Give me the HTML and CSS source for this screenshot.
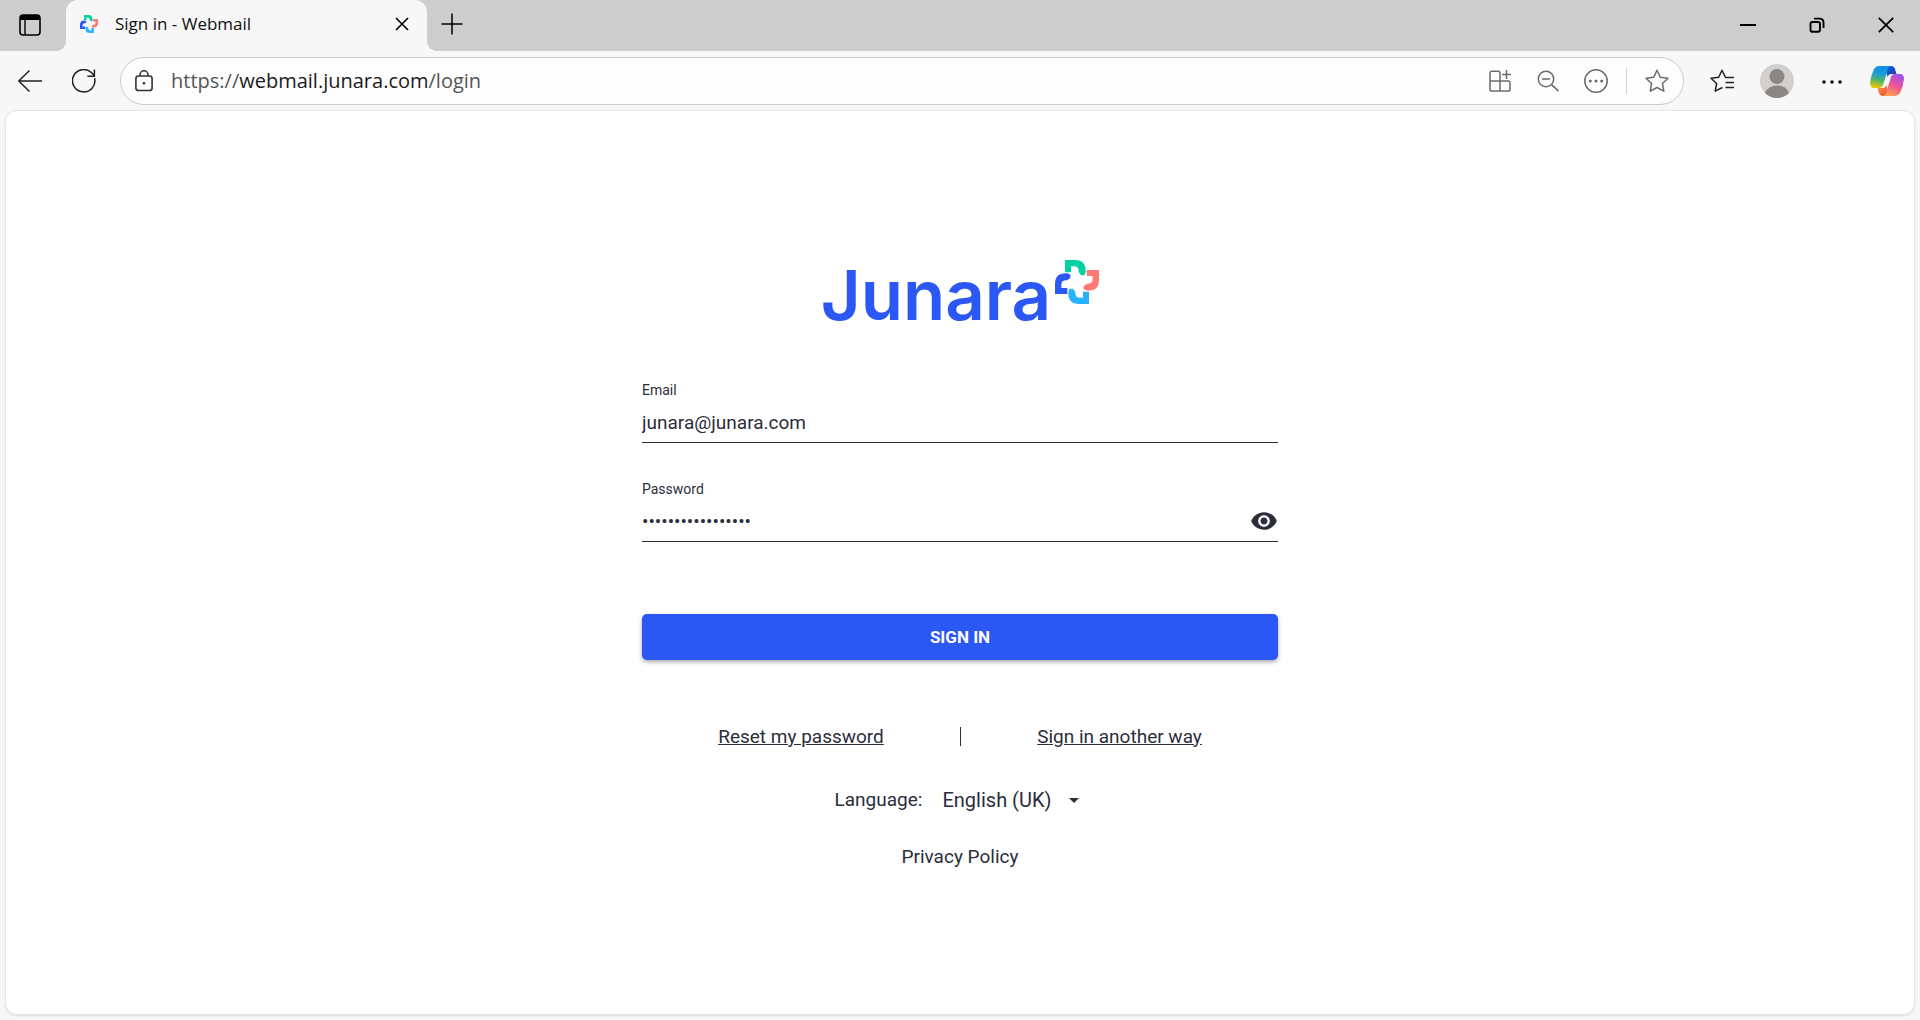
FILE: index.html
```html
<!DOCTYPE html>
<html lang="en">

<head>
    <meta charset="utf-8">
    <title>Sign in - Webmail</title>
    <link rel="stylesheet" href="styles.css">
</head>

<body>
    <!-- shared logo mark: one piece turned four times -->
    <svg class="defs" width="0" height="0" aria-hidden="true">
        <symbol id="mark" viewBox="0 0 132 132">
            <path fill="#00d2a5" d="M30 0H60Q92 0 92 32Q92 40 88 46H78L71 36Q72 19 58 19H48V37H30Z"/>
            <path fill="#ff7a76" transform="rotate(90 66 66)" d="M30 0H60Q92 0 92 32Q92 40 88 46H78L71 36Q72 19 58 19H48V37H30Z"/>
            <path fill="#27b3ff" transform="rotate(180 66 66)" d="M30 0H60Q92 0 92 32Q92 40 88 46H78L71 36Q72 19 58 19H48V37H30Z"/>
            <path fill="#2b57f5" transform="rotate(270 66 66)" d="M30 0H60Q92 0 92 32Q92 40 88 46H78L71 36Q72 19 58 19H48V37H30Z"/>
        </symbol>
    </svg>

    <header class="browser">
        <div class="tab-strip">
            <button class="icon-button tab-actions" aria-label="Tab actions">
                <svg width="24" height="24" viewBox="0 0 24 24"><rect x="2" y="2" width="20" height="20" rx="3" fill="none" stroke="#000" stroke-width="1.6"/><path d="M2 7V5q0-3 3-3h14q3 0 3 3v2z"/><path d="M7 7v15" stroke="#000" stroke-width="1.4"/></svg>
            </button>
            <div class="tab">
                <svg class="favicon" width="18" height="18"><use href="#mark"/></svg>
                <span class="tab-title">Sign in - Webmail</span>
                <button class="icon-button" aria-label="Close tab">
                    <svg width="14" height="14" viewBox="0 0 14 14"><path d="M1 1l12 12M13 1L1 13" fill="none" stroke="#000" stroke-width="1.6"/></svg>
                </button>
            </div>
            <button class="icon-button new-tab" aria-label="New tab">
                <svg width="22" height="22" viewBox="0 0 22 22"><path d="M11 .5v21M.5 11h21" fill="none" stroke="#000" stroke-width="1.5"/></svg>
            </button>
            <div class="window-controls">
                <button class="icon-button" aria-label="Minimise">
                    <svg width="16" height="16" viewBox="0 0 16 16"><path d="M0 8h16" stroke="#000" stroke-width="2"/></svg>
                </button>
                <button class="icon-button" aria-label="Restore">
                    <svg width="16" height="16" viewBox="0 0 16 16" fill="none" stroke="#000" stroke-width="1.9"><rect x="1.5" y="5" width="9.5" height="9.8" rx="2"/><path d="M5 1.6h5.5q4 0 4 4V11"/></svg>
                </button>
                <button class="icon-button" aria-label="Close">
                    <svg width="16" height="16" viewBox="0 0 16 16"><path d="M.8.8l14.4 14.4M15.2.8L.8 15.2" fill="none" stroke="#000" stroke-width="1.8"/></svg>
                </button>
            </div>
        </div>

        <div class="toolbar">
            <button class="icon-button" aria-label="Back">
                <svg width="24" height="24" viewBox="0 0 24 24" fill="none" stroke="#222" stroke-width="1.5"><path d="M24 12H.8M11.5 1.5L.8 12l10.7 10.5"/></svg>
            </button>
            <button class="icon-button reload" aria-label="Reload">
                <svg width="24" height="24" viewBox="0 0 24 24" fill="none" stroke="#222" stroke-width="1.5"><path d="M22.6 9.2A11.2 11.2 0 1 1 19.6 3.8l2.6 2.8M22.4.5v6.7h-7"/></svg>
            </button>

            <div class="address-bar">
                <svg width="18" height="22" viewBox="0 0 18 22" fill="none" stroke="#333" stroke-width="1.6"><rect x=".9" y="6" width="16.2" height="14.5" rx="2.6"/><path d="M5 6V4.8a4 4 0 0 1 8 0V6"/><circle cx="9" cy="13.2" r="1.3" fill="#333" stroke="none"/></svg>
                <a class="url" href="#"><span>https://</span>webmail.junara.com<span>/login</span></a>
                <div class="address-actions">
                    <button class="icon-button" aria-label="Install app">
                        <svg width="24" height="24" viewBox="0 0 24 24" fill="none" stroke="#6b6b6b" stroke-width="1.5"><path d="M12 12V4q0-1.8-1.8-1.8H3.800Q2 2.200 2 4v16.200Q2 22 3.800 22h16.400q1.800 0 1.800-1.800V13.800Q22 12 20.200 12H2M12 12v10M18.500 1v9M14 5.500h9"/></svg>
                    </button>
                    <button class="icon-button" aria-label="Zoom out">
                        <svg width="24" height="24" viewBox="0 0 24 24" fill="none" stroke="#6b6b6b" stroke-width="1.5"><circle cx="10" cy="10" r="7.7"/><path d="M15.6 15.6l6.900 6.500M6 10h8"/></svg>
                    </button>
                    <button class="icon-button" aria-label="More actions">
                        <svg width="24" height="24" viewBox="0 0 24 24" fill="none" stroke="#6b6b6b" stroke-width="1.5"><circle cx="12" cy="12" r="11.2"/><g fill="#6b6b6b" stroke="none"><circle cx="6.3" cy="12" r="1.5"/><circle cx="12" cy="12" r="1.5"/><circle cx="17.7" cy="12" r="1.5"/></g></svg>
                    </button>
                    <span class="separator"></span>
                    <button class="icon-button" aria-label="Add to favourites">
                        <svg width="24" height="24" viewBox="0 0 24 24" fill="none" stroke="#6b6b6b" stroke-width="1.5" stroke-linejoin="round"><path d="M12 1.200l3.300 7 7.700 1-5.600 5.300 1.400 7.700-6.800-3.700-6.800 3.700 1.400-7.700L1 9.200l7.700-1z"/></svg>
                    </button>
                </div>
            </div>

            <button class="icon-button" aria-label="Favourites">
                <svg width="24" height="24" viewBox="0 0 24 24" fill="none" stroke="#222" stroke-width="1.5" stroke-linejoin="round"><path d="M15.300 8.200L12 1.200 8.700 8.200 1 9.200l5.600 5.300-1.400 7.700L12.500 18.500M15.500 13.500H24M15.500 18.500H24M15 8.500h9"/></svg>
            </button>
            <button class="icon-button" aria-label="Profile">
                <svg width="34" height="34" viewBox="0 0 34 34"><circle cx="17" cy="17" r="17" fill="#d2d0ce"/><circle cx="17" cy="12.5" r="7.5" fill="#8a8683"/><path d="M5 29Q8 21.500 17 21.500T29 29Q24 34 17 34T5 29z" fill="#8a8683"/></svg>
            </button>
            <button class="icon-button more" aria-label="Settings and more">
                <svg width="20" height="20" viewBox="0 0 20 20" fill="#111"><circle cx="2" cy="11" r="1.8"/><circle cx="10" cy="11" r="1.8"/><circle cx="18" cy="11" r="1.8"/></svg>
            </button>
            <button class="icon-button" aria-label="Copilot">
                <svg width="34" height="32" viewBox="0 0 34 32">
                    <defs>
                        <linearGradient id="cool" x1="0.5" y1="0" x2="0.3" y2="1"><stop offset="0" stop-color="#0f8fe6"/><stop offset=".35" stop-color="#1b9cdc"/><stop offset=".65" stop-color="#50b860"/><stop offset="1" stop-color="#f6c800"/></linearGradient>
                        <linearGradient id="warm" x1="0.7" y1="0" x2="0.3" y2="1"><stop offset="0" stop-color="#a04ef0"/><stop offset=".5" stop-color="#ee5594"/><stop offset="1" stop-color="#ffa04e"/></linearGradient>
                        <linearGradient id="navy" x1="0" y1="0" x2="1" y2="1"><stop offset="0" stop-color="#0a62dc"/><stop offset="1" stop-color="#2338b4"/></linearGradient>
                        <linearGradient id="ember" x1="0" y1="0" x2="1" y2="1"><stop offset="0" stop-color="#ffa040"/><stop offset="1" stop-color="#e8433c"/></linearGradient>
                    </defs>
                    <path fill="url(#navy)" d="M15 1h6q3 0 4 3l1.500 5h-5q-3 0-4 3z"/>
                    <path fill="url(#ember)" d="M19 31h-6q-3 0-4-3l-1.500-5h5q3 0 4-3z"/>
                    <path fill="url(#cool)" d="M9 1h12q-2 0-3 3l-5 16q-1 3-4 3H4q-4 0-4-5Q1 10 4 4q2-3 5-3z"/>
                    <path fill="url(#warm)" d="M25 31H13q2 0 3-3l5-16q1-3 4-3h5q4 0 4 5-1 8-4 14-2 3-5 3z"/>
                </svg>
            </button>
        </div>
    </header>

    <main class="page">
        <form class="login" onsubmit="return false">
            <div class="logo">
                <span class="logo-text">Junara</span>
                <svg class="logo-mark" width="44" height="44"><use href="#mark"/></svg>
            </div>

            <div class="field">
                <label for="email">Email</label>
                <input type="email" id="email" value="junara@junara.com" spellcheck="false">
            </div>

            <div class="field">
                <label for="password">Password</label>
                <div class="password-row">
                    <input type="password" id="password" value="abcdefghijklmnopq">
                    <button type="button" class="icon-button" id="toggle" aria-label="Show password">
                        <svg width="28" height="28" viewBox="0 0 24 24" fill="#2b2d3b"><path d="M12 4.500C7 4.500 2.730 7.610 1 12c1.730 4.390 6 7.500 11 7.500s9.270-3.110 11-7.500c-1.730-4.390-6-7.500-11-7.500zM12 17c-2.760 0-5-2.240-5-5s2.240-5 5-5 5 2.240 5 5-2.240 5-5 5zm0-8c-1.660 0-3 1.340-3 3s1.340 3 3 3 3-1.340 3-3-1.340-3-3-3z"/></svg>
                    </button>
                </div>
            </div>

            <button type="submit" class="submit-button">SIGN IN</button>

            <div class="links">
                <a href="#">Reset my password</a>
                <span class="divider"></span>
                <a href="#">Sign in another way</a>
            </div>

            <div class="language">
                <label for="language">Language:</label>
                <div class="select-wrap">
                    <select id="language">
                        <option>English (UK)</option>
                    </select>
                    <svg width="10" height="5" viewBox="0 0 10 5"><path d="M0 0h10L5 5z" fill="#2b2d3b"/></svg>
                </div>
            </div>

            <a class="privacy" href="#">Privacy Policy</a>
        </form>
    </main>

    <script>
        // show or hide the password
        document.getElementById("toggle").addEventListener("click", function () {
            const password = document.getElementById("password");
            password.type = password.type === "password" ? "text" : "password";
        });
    </script>
</body>

</html>
```

FILE: styles.css
```css
* {
    box-sizing: border-box;
}

body {
    margin: 0;
    min-height: 100vh;
    display: flex;
    flex-direction: column;
    background-color: #f7f7f7;
    color: #2b2d3b;
    font-family: Roboto, sans-serif;
    font-size: 19px;
}

.defs {
    position: absolute;
}

svg {
    display: block;
    flex-shrink: 0;
}

.icon-button {
    display: flex;
    align-items: center;
    justify-content: center;
    padding: 0;
    border: 0;
    background: none;
    cursor: pointer;
}

/* Browser */

.browser {
    font-family: "Open Sans", sans-serif;
}

.tab-strip {
    display: flex;
    align-items: center;
    height: 51px;
    padding-bottom: 2px;
    background-color: #cdcdcd;
}

.tab-actions {
    width: 60px;
    margin-right: 6px;
}

.tab {
    position: relative;
    align-self: flex-start;
    display: flex;
    align-items: center;
    width: 361px;
    height: 51px;
    padding: 0 18px 4px 14px;
    background-color: #f7f7f7;
    border-radius: 12px 12px 0 0;
}

.tab::before,
.tab::after {
    content: "";
    position: absolute;
    bottom: 0;
    width: 10px;
    height: 10px;
}

.tab::before {
    right: 100%;
    background: radial-gradient(circle at 0 0, #cdcdcd 10px, #f7f7f7 10px);
}

.tab::after {
    left: 100%;
    background: radial-gradient(circle at 100% 0, #cdcdcd 10px, #f7f7f7 10px);
}

.tab-title {
    flex: 1;
    margin-left: 17px;
    color: #111;
    font-size: 17px;
}

.new-tab {
    margin: 0 0 2px 14px;
}

.window-controls {
    display: flex;
    margin-left: auto;
}

.window-controls .icon-button {
    width: 69px;
    height: 49px;
}

.toolbar {
    display: flex;
    align-items: center;
    gap: 26px;
    height: 59px;
    padding: 0 16px 0 18px;
}

.toolbar .reload {
    margin: 0 -2px 0 4px;
}

.toolbar .more {
    width: 24px;
}

.address-bar {
    flex: 1;
    display: flex;
    align-items: center;
    height: 48px;
    padding: 0 14px;
    background-color: #fdfdfd;
    border: 1px solid #cbcbcb;
    border-radius: 24px;
}

.url {
    margin-left: 18px;
    color: #1b1b1b;
    font-size: 20px;
    text-decoration: none;
}

.url span {
    color: #555;
}

.address-actions {
    display: flex;
    align-items: center;
    gap: 24px;
    margin-left: auto;
}

.separator {
    width: 1px;
    height: 26px;
    margin: 0 -6px;
    background-color: #d5d5d5;
}

/* Login page */

.page {
    flex: 1;
    display: flex;
    align-items: center;
    justify-content: center;
    margin: 0 5px 5px;
    background-color: #fff;
    border: 1px solid #e6e6e6;
    border-radius: 12px;
    box-shadow: 0 1px 2px rgba(0, 0, 0, 0.1);
}

.login {
    display: flex;
    flex-direction: column;
    width: 100%;
    max-width: 636px;
    padding-top: 4px;
}

.logo {
    display: flex;
    align-items: flex-start;
    justify-content: center;
    gap: 4px;
    height: 120px;
}

.logo-text {
    color: #2b57f5;
    font-family: Inter, sans-serif;
    font-size: 69px;
    font-weight: 600;
    line-height: 70px;
}

.field {
    height: 63px;
    margin-bottom: 36px;
    border-bottom: 1px solid #2b2d3b;
}

.field label {
    display: block;
    font-size: 14px;
    line-height: 20px;
}

.field input {
    width: 100%;
    height: 44px;
    padding: 0;
    border: 0;
    outline: 0;
    background: none;
    color: #2b2d3b;
    font-family: Roboto, sans-serif;
    font-size: 19px;
}

.password-row {
    display: flex;
    align-items: center;
}

.submit-button {
    height: 46px;
    margin: 36px 0 59px;
    padding: 0;
    border: 0;
    border-radius: 5px;
    background-color: #2b57f5;
    box-shadow: 0 2px 4px rgba(0, 0, 0, 0.35);
    color: #fff;
    font-family: Roboto, sans-serif;
    font-size: 17px;
    font-weight: 700;
    cursor: pointer;
}

a {
    color: #2b2d3b;
}

.links {
    display: flex;
    align-items: center;
    justify-content: space-evenly;
    height: 34px;
}

.divider {
    width: 1px;
    height: 19px;
    background-color: #2b2d3b;
}

.language {
    display: flex;
    align-items: center;
    justify-content: center;
    gap: 20px;
    margin-top: 30px;
    padding-right: 6px;
    line-height: 34px;
}

.select-wrap {
    display: flex;
    align-items: center;
    gap: 18px;
}

select {
    appearance: none;
    padding: 0;
    border: 0;
    background: none;
    color: #2b2d3b;
    font-family: Roboto, sans-serif;
    font-size: 20px;
}

.privacy {
    align-self: center;
    margin-top: 28px;
    line-height: 24px;
    text-decoration: none;
}
```
